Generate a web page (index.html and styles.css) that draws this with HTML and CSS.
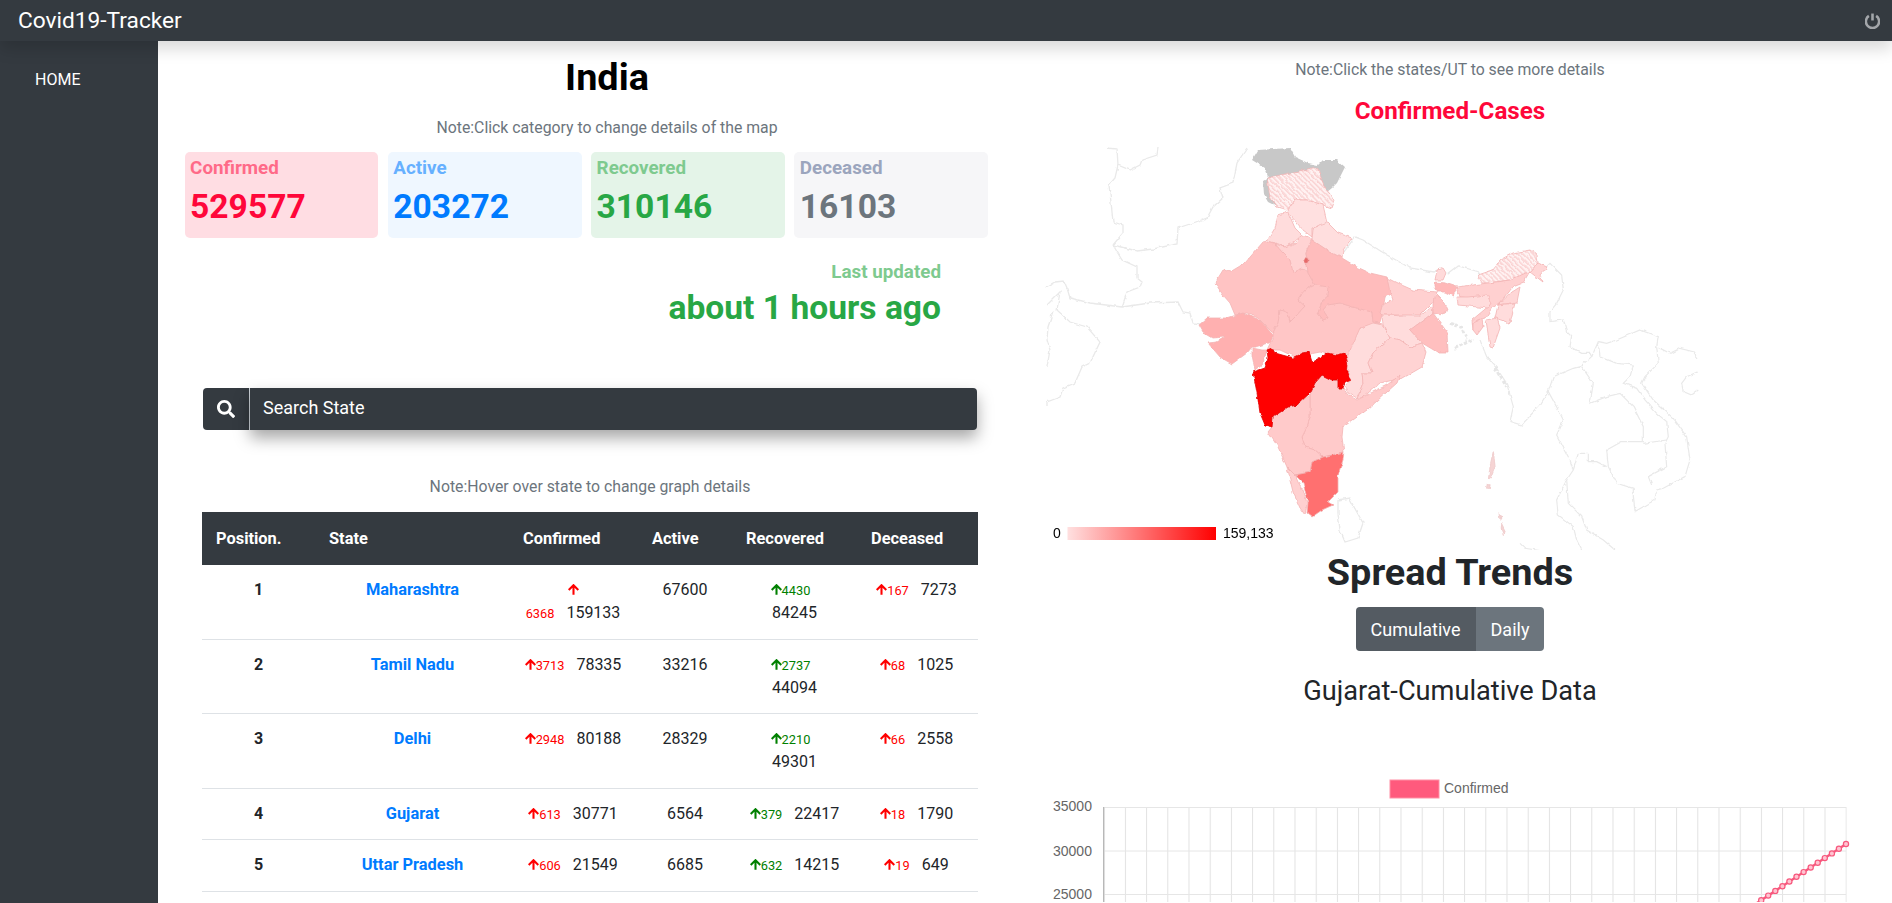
FILE: index.html
```html
<!DOCTYPE html>
<html lang="en">
<head>
  <meta charset="UTF-8">
  <title>Covid19-Tracker</title>
  <link rel="stylesheet" href="styles.css">
</head>
<body>
  <nav class="navbar">
    <span class="brand">Covid19-Tracker</span>
    <svg class="power" viewBox="1 .5 14 15"><path d="M4.6 3.2a6.2 6.2 0 1 0 6.8 0"/><path d="M8 1v6.5"/></svg>
  </nav>

  <div class="shell">
    <aside class="sidebar"><a class="side-link" href="#">HOME</a></aside>

    <main class="content">
      <section class="left">
        <h1 class="country">India</h1>
        <p class="note note-top">Note:Click category to change details of the map</p>

        <div class="cards">
          <div class="card card-red"><h5>Confirmed</h5><h2>529577</h2></div>
          <div class="card card-blue"><h5>Active</h5><h2>203272</h2></div>
          <div class="card card-green"><h5>Recovered</h5><h2>310146</h2></div>
          <div class="card card-gray"><h5>Deceased</h5><h2>16103</h2></div>
        </div>

        <div class="updated">
          <h5>Last updated</h5>
          <h2>about 1 hours ago</h2>
        </div>

        <div class="search">
          <span class="search-icon">
            <svg viewBox="0 0 512 512"><path d="M505 442.7L405.3 343c-4.5-4.5-10.6-7-17-7H372c27.6-35.3 44-79.7 44-128C416 93.1 322.9 0 208 0S0 93.1 0 208s93.1 208 208 208c48.3 0 92.7-16.4 128-44v16.3c0 6.4 2.5 12.5 7 17l99.7 99.7c9.4 9.4 24.6 9.4 33.9 0l28.3-28.3c9.4-9.4 9.4-24.6.1-34zM208 336c-70.7 0-128-57.2-128-128 0-70.7 57.2-128 128-128 70.7 0 128 57.2 128 128 0 70.7-57.2 128-128 128z"/></svg>
          </span>
          <input class="search-input" type="text" placeholder="Search State">
        </div>

        <p class="note note-table">Note:Hover over state to change graph details</p>

        <table class="states">
          <thead>
            <tr><th>Position.</th><th>State</th><th>Confirmed</th><th>Active</th><th>Recovered</th><th>Deceased</th></tr>
          </thead>
          <tbody>
            <tr>
              <td class="strong">1</td>
              <td><a class="state" href="#">Maharashtra</a></td>
              <td><span class="delta red"><svg class="arrow" viewBox="4 4 16 16"><path d="M12 19V5M5 12l7-7 7 7"/></svg><br>6368</span> 159133</td>
              <td>67600</td>
              <td><span class="delta green"><svg class="arrow" viewBox="4 4 16 16"><path d="M12 19V5M5 12l7-7 7 7"/></svg>4430</span><br>84245</td>
              <td><span class="delta red"><svg class="arrow" viewBox="4 4 16 16"><path d="M12 19V5M5 12l7-7 7 7"/></svg>167</span> 7273</td>
            </tr>
            <tr>
              <td class="strong">2</td>
              <td><a class="state" href="#">Tamil Nadu</a></td>
              <td><span class="delta red"><svg class="arrow" viewBox="4 4 16 16"><path d="M12 19V5M5 12l7-7 7 7"/></svg>3713</span> 78335</td>
              <td>33216</td>
              <td><span class="delta green"><svg class="arrow" viewBox="4 4 16 16"><path d="M12 19V5M5 12l7-7 7 7"/></svg>2737</span><br>44094</td>
              <td><span class="delta red"><svg class="arrow" viewBox="4 4 16 16"><path d="M12 19V5M5 12l7-7 7 7"/></svg>68</span> 1025</td>
            </tr>
            <tr>
              <td class="strong">3</td>
              <td><a class="state" href="#">Delhi</a></td>
              <td><span class="delta red"><svg class="arrow" viewBox="4 4 16 16"><path d="M12 19V5M5 12l7-7 7 7"/></svg>2948</span> 80188</td>
              <td>28329</td>
              <td><span class="delta green"><svg class="arrow" viewBox="4 4 16 16"><path d="M12 19V5M5 12l7-7 7 7"/></svg>2210</span><br>49301</td>
              <td><span class="delta red"><svg class="arrow" viewBox="4 4 16 16"><path d="M12 19V5M5 12l7-7 7 7"/></svg>66</span> 2558</td>
            </tr>
            <tr>
              <td class="strong">4</td>
              <td><a class="state" href="#">Gujarat</a></td>
              <td><span class="delta red"><svg class="arrow" viewBox="4 4 16 16"><path d="M12 19V5M5 12l7-7 7 7"/></svg>613</span> 30771</td>
              <td>6564</td>
              <td><span class="delta green"><svg class="arrow" viewBox="4 4 16 16"><path d="M12 19V5M5 12l7-7 7 7"/></svg>379</span> 22417</td>
              <td><span class="delta red"><svg class="arrow" viewBox="4 4 16 16"><path d="M12 19V5M5 12l7-7 7 7"/></svg>18</span> 1790</td>
            </tr>
            <tr>
              <td class="strong">5</td>
              <td><a class="state" href="#">Uttar Pradesh</a></td>
              <td><span class="delta red"><svg class="arrow" viewBox="4 4 16 16"><path d="M12 19V5M5 12l7-7 7 7"/></svg>606</span> 21549</td>
              <td>6685</td>
              <td><span class="delta green"><svg class="arrow" viewBox="4 4 16 16"><path d="M12 19V5M5 12l7-7 7 7"/></svg>632</span> 14215</td>
              <td><span class="delta red"><svg class="arrow" viewBox="4 4 16 16"><path d="M12 19V5M5 12l7-7 7 7"/></svg>19</span> 649</td>
            </tr>
          </tbody>
        </table>
      </section>

      <section class="right">
        <p class="note note-map">Note:Click the states/UT to see more details</p>
        <h4 class="map-title">Confirmed-Cases</h4>

        <!-- map coords are page pixels, so the viewBox starts at the box's corner -->
        <svg class="map" viewBox="1040 147 820 403">
          <defs>
            <pattern id="hatch" width="3.6" height="3.6" patternUnits="userSpaceOnUse" patternTransform="rotate(-45)">
              <rect width="3.6" height="3.6" fill="#fff2f2"/>
              <rect width="1.5" height="3.6" fill="#fad2d2"/>
            </pattern>
            <linearGradient id="scale">
              <stop offset="0" stop-color="#ffe0e0"/>
              <stop offset="1" stop-color="#f00"/>
            </linearGradient>
            <!-- roughens the straight polygon edges so they read like real borders -->
            <filter id="rough" x="1040" y="147" width="820" height="403" filterUnits="userSpaceOnUse" color-interpolation-filters="sRGB">
              <feTurbulence type="fractalNoise" baseFrequency="0.16" numOctaves="2" seed="4"/>
              <feDisplacementMap in="SourceGraphic" scale="3.5" xChannelSelector="R" yChannelSelector="G"/>
            </filter>
          </defs>

          <g filter="url(#rough)">
            <g class="borders">
              <polyline points="1107,148 1117,149 1118,165 1130,170 1140,165 1142,160 1157,155 1158,148"/>
              <polyline points="1118,165 1115,178 1109,185 1111,202 1113,222 1123,225 1123,233 1113,245"/>
              <polyline points="1113,245 1137,251 1153,249 1177,244 1178,228 1193,223 1207,218 1213,207 1223,198 1220,188 1233,183 1237,163 1247,148"/>
              <polyline points="1113,245 1122,260 1137,267 1137,278 1142,282 1140,287 1127,292 1122,307"/>
              <polyline points="1046,287 1055,282 1064,281 1067,288 1070,298 1090,303 1122,307 1150,303 1178,302 1183,312 1190,313 1193,323 1200,324"/>
              <polyline points="1047,305 1060,292 1057,310 1070,322 1087,327 1100,342 1090,363 1082,367 1075,383 1063,388 1060,397 1047,402 1047,407"/>
              <polyline points="1053,312 1048,327 1047,340 1050,350 1047,367"/>
              <polyline points="1343,253 1355,237 1363,240 1387,255 1410,268 1433,272 1437,270"/>
              <polyline points="1338,500 1349,498 1363,523 1358,538 1345,542 1340,530 1338,513 1338,500"/>
            </g>

            <g class="borders east" transform="translate(1400 240) scale(.3333)">
              <polyline points="140,105 175,78 235,95 240,105"/>
              <polyline points="440,80 450,70 485,105 490,150 470,190 450,215 450,245 490,240 500,275 515,290 510,320 545,340 570,340 575,350 540,380 520,385 460,410 445,455 475,510 490,540 470,585 510,660 520,690 500,720 490,740 470,780 475,825 520,860 530,900 545,930"/>
              <polyline points="240,300 260,350 290,385 320,430 340,500 330,545 365,555 420,495 445,455"/>
              <polyline points="575,350 595,305 620,310 650,300 720,270 775,290 770,320 810,340 840,325 880,335 895,355"/>
              <polyline points="595,310 600,350 650,370 700,375 690,410 670,430 710,445 735,480 770,520 800,545 805,590 795,610 800,680 745,710 755,735"/>
              <polyline points="770,320 775,370 735,410 725,430 760,480 820,535 860,590 870,660 855,710 790,745 770,750 765,780 705,815 700,770 700,745"/>
              <polyline points="895,395 860,410 845,430 850,455 875,465 895,450"/>
              <polyline points="545,380 580,430 570,490 620,470 660,460 700,500 730,560 730,605 665,605 620,630 625,680 650,730 700,745"/>
              <polyline points="730,610 800,600"/>
              <polyline points="620,680 590,665 565,665 565,640 535,640 520,690"/>
              <polyline points="500,720 505,790 545,830 560,870 610,900 645,930"/>
              <polyline points="360,910 375,925 440,935"/>
              <polyline class="bangla" points="150,250 185,262 200,300"/>
              <polyline class="bangla" points="165,325 220,298"/>
              <polyline class="bangla" points="285,385 320,440"/>
              <polygon class="andaman" points="280,635 285,680 272,715 266,710 272,670"/>
              <polygon class="andaman" points="262,733 270,735 268,745 260,744"/>
              <polygon class="andaman" points="305,855 315,875 310,882 304,868"/>
              <polygon class="andaman" points="298,822 305,830 300,838"/>
            </g>

            <g class="states-map">
              <polygon fill="#c8c8c8" stroke="none" points="1252,160 1258,150 1290,148 1295,157 1308,163 1318,165 1323,160 1337,160 1345,167 1337,183 1332,188 1327,192 1300,195 1280,208 1268,202 1264,195 1263,180 1268,177 1265,168"/>
              <polygon fill="url(#hatch)" points="1267,178 1317,167 1325,188 1335,200 1332,208 1323,205 1307,200 1295,200 1287,210 1277,207 1270,197"/>
              <polygon fill="#ffe0e0" points="1295,200 1307,200 1323,205 1327,222 1312,228 1312,237 1303,230 1290,215 1288,210"/>
              <polygon fill="#ffdcdc" points="1278,215 1288,212 1295,228 1302,235 1293,243 1285,247 1275,243 1267,241 1275,228"/>
              <polygon fill="#ffdede" points="1313,228 1328,223 1338,233 1352,238 1343,250 1342,258 1330,252 1312,240"/>
              <polygon fill="#ffc3c3" points="1267,241 1275,243 1283,253 1290,260 1293,272 1302,268 1308,273 1315,285 1305,290 1298,300 1305,306 1296,316 1290,322 1288,313 1280,310 1278,323 1273,333 1258,318 1247,313 1235,315 1230,303 1223,295 1215,283 1223,270 1230,272 1245,263 1263,242"/>
              <polygon fill="#ffd3d3" points="1275,244 1285,247 1295,243 1303,235 1312,239 1306,252 1308,272 1302,268 1293,272 1290,260 1283,253"/>
              <polygon fill="#ffc6c6" points="1305,290 1315,285 1329,287 1328,297 1322,302 1318,313 1323,320 1328,318 1323,310 1327,305 1340,303 1353,307 1372,312 1373,322 1380,323 1360,328 1365,333 1348,355 1330,355 1320,352 1305,355 1295,357 1280,350 1267,350 1273,337 1273,333 1278,323 1280,310 1288,313 1290,322 1296,316 1305,306 1298,300"/>
              <polygon fill="#ffbcbc" points="1312,240 1330,252 1342,258 1357,267 1370,273 1387,277 1390,287 1394,292 1385,297 1383,310 1380,323 1373,322 1372,312 1353,307 1340,303 1327,305 1323,310 1328,318 1323,320 1318,313 1322,302 1328,297 1329,287 1315,285 1308,273 1306,252"/>
              <polygon fill="#ffb0b0" points="1199,325 1207,318 1227,318 1243,313 1260,320 1273,335 1269,343 1255,347 1252,347 1247,353 1232,364 1220,357 1208,343 1217,342 1225,337 1213,338 1203,332"/>
              <polygon fill="#ffb8b8" points="1252,348 1262,350 1267,350 1263,363 1255,370 1252,355"/>
              <polygon fill="#ffdcdc" points="1348,355 1360,328 1373,323 1383,325 1390,338 1373,353 1368,363 1372,373 1362,373 1363,383 1357,398 1348,393 1345,387 1351,380 1347,365"/>
              <polygon fill="#ffd0d0" points="1387,278 1397,283 1413,290 1437,292 1433,302 1420,315 1407,315 1382,315 1380,313 1382,305 1393,300 1390,292"/>
              <polygon fill="#ffdcdc" points="1382,315 1407,316 1420,316 1432,307 1433,313 1410,330 1422,343 1410,347 1400,340 1390,338 1383,325"/>
              <polygon fill="#ffbfbf" points="1410,330 1433,313 1447,332 1448,352 1437,352 1422,343"/>
              <polygon fill="#ffc4c4" points="1433,302 1437,295 1445,303 1448,310 1440,315 1433,313"/>
              <polygon fill="#ffd3d3" points="1390,338 1400,340 1410,347 1422,343 1426,352 1422,367 1403,378 1380,383 1362,398 1357,398 1363,383 1362,373 1372,373 1368,363 1373,353"/>
              <polygon fill="#ffcaca" points="1310,395 1315,383 1322,375 1332,380 1338,381 1338,388 1343,388 1348,395 1357,400 1387,385 1400,375 1397,383 1367,410 1353,420 1343,427 1342,437 1344,452 1323,457 1315,450 1305,447 1302,437 1307,427 1310,417"/>
              <polygon fill="#ffcaca" points="1272,427 1273,417 1288,407 1297,405 1310,395 1310,417 1307,427 1302,437 1305,447 1315,450 1323,457 1312,462 1310,472 1295,475 1287,467 1278,447 1268,432"/>
              <polygon fill="#ffd0d0" points="1295,475 1298,482 1303,490 1307,503 1305,515 1300,508 1293,492 1287,467"/>
              <polygon fill="#ff7070" points="1344,452 1343,460 1338,475 1338,492 1328,502 1333,505 1322,510 1312,517 1307,513 1308,502 1303,483 1295,475 1310,472 1312,462 1323,457"/>
              <polygon fill="#f00" stroke="#e00000" points="1267,350 1272,348 1275,353 1293,358 1303,353 1309,352 1312,362 1328,353 1337,355 1345,353 1348,365 1347,373 1351,380 1345,383 1343,388 1338,388 1338,380 1332,380 1322,375 1315,383 1310,393 1297,405 1288,407 1273,417 1272,427 1265,425 1260,413 1257,393 1253,372 1265,368 1268,358"/>
              <circle fill="#e66a6a" cx="1306" cy="261" r="2.4"/>
              <polygon fill="#ffdada" points="1435,280 1437,270 1443,268 1446,273 1443,280"/>
              <polygon fill="#ffb8b8" points="1435,282 1445,283 1457,287 1453,296 1445,292 1438,292 1435,287"/>
              <polygon fill="url(#hatch)" points="1478,275 1493,270 1500,260 1513,253 1530,250 1537,255 1538,263 1530,272 1510,280 1488,283 1482,283"/>
              <polygon fill="#ffd6d6" points="1530,272 1538,263 1547,267 1540,275 1543,282"/>
              <polygon fill="#ffd0d0" points="1457,287 1488,283 1510,280 1530,271 1523,283 1513,287 1500,303 1492,308 1485,318 1478,320 1473,330 1472,320 1490,305 1485,300 1460,297"/>
              <polygon fill="#ffdcdc" points="1457,297 1468,297 1487,295 1491,303 1488,308 1458,305"/>
              <polygon fill="#ffd6d6" points="1500,303 1512,292 1520,287 1517,302 1498,305"/>
              <polygon fill="#ffdcdc" points="1498,305 1515,303 1510,323 1495,318"/>
              <polygon fill="#ffdcdc" points="1486,320 1497,318 1500,328 1493,348 1490,347"/>
              <polygon fill="#ffd0d0" points="1473,323 1482,319 1483,327 1477,335 1473,330"/>
            </g>
          </g>

          <text class="map-legend" x="1053" y="538">0</text>
          <rect x="1067.5" y="527" width="148.5" height="13" fill="url(#scale)"/>
          <text class="map-legend" x="1223" y="538">159,133</text>
        </svg>

        <h1 class="trends">Spread Trends</h1>
        <div class="btn-group">
          <button class="btn btn-active">Cumulative</button>
          <button class="btn">Daily</button>
        </div>
        <h3 class="chart-title">Gujarat-Cumulative Data</h3>

        <svg class="chart" viewBox="1040 770 820 133">
          <defs>
            <pattern id="vgrid" x="1103.7" y="0" width="21.2" height="200" patternUnits="userSpaceOnUse">
              <rect width="1" height="200" fill="#e2e2e2"/>
            </pattern>
          </defs>
          <rect x="1390" y="781" width="49" height="18" fill="#ff5a7d" stroke="#ff8fa6"/>
          <text class="tick" x="1444" y="794">Confirmed</text>
          <rect x="1103.7" y="808" width="743" height="95" fill="url(#vgrid)"/>
          <path class="grid" d="M1104 808.5H1846M1104 852H1846M1104 895.5H1846"/>
          <path class="axis" d="M1103.7 808V903"/>
          <text class="tick" x="1053" y="812">35000</text>
          <text class="tick" x="1053" y="857">30000</text>
          <text class="tick" x="1053" y="900">25000</text>
          <polyline class="trend" points="1846,845 1754,906"/>
          <g class="pts">
            <circle cx="1846" cy="845" r="2.6"/><circle cx="1838.9" cy="849.7" r="2.6"/><circle cx="1831.9" cy="854.4" r="2.6"/>
            <circle cx="1824.8" cy="859.1" r="2.6"/><circle cx="1817.7" cy="863.8" r="2.6"/><circle cx="1810.7" cy="868.5" r="2.6"/>
            <circle cx="1803.6" cy="873.1" r="2.6"/><circle cx="1796.5" cy="877.8" r="2.6"/><circle cx="1789.4" cy="882.5" r="2.6"/>
            <circle cx="1782.4" cy="887.2" r="2.6"/><circle cx="1775.3" cy="891.9" r="2.6"/><circle cx="1768.2" cy="896.6" r="2.6"/>
            <circle cx="1761.2" cy="901.3" r="2.6"/>
          </g>
        </svg>
      </section>
    </main>
  </div>
</body>
</html>
```
FILE: styles.css
```css
* {
  box-sizing: border-box;
}

html, body {
  height: 100%;
}

body {
  margin: 0;
  font-family: Roboto, "Liberation Sans", sans-serif;
  font-size: 16px;
  color: #212529;
  background: #fff;
  overflow: hidden;
}

.navbar {
  position: relative;
  z-index: 2;
  height: 41px;
  padding: 0 12px 0 18px;
  display: flex;
  align-items: center;
  justify-content: space-between;
  background: #343a40;
  box-shadow: 0 8px 16px rgba(0,0,0,0.15);
}

.brand {
  color: #fff;
  font-size: 22.7px;
}

.power {
  width: 15px;
  height: 16px;
  fill: none;
  stroke: #a3a6aa;
  stroke-width: 2.4;
}

.shell {
  display: flex;
  height: calc(100% - 41px);
}

.sidebar {
  width: 158px;
  flex: none;
  background: #343a40;
  padding-top: 27px;
  padding-left: 35px;
}

.side-link {
  color: #fff;
  text-decoration: none;
  line-height: 24px;
}

.content {
  flex: 1;
  display: flex;
  overflow: hidden;
}

.left {
  width: 867px;
  flex: none;
}

.right {
  width: 820px;
  flex: none;
  margin-left: 15px;
  text-align: center;
}

.note {
  margin: 0;
  color: #6c757d;
  font-size: 15.8px;
  line-height: 24px;
}

.country {
  margin: 14px 0 0;
  padding-left: 31px;
  text-align: center;
  font-size: 37.8px;
  line-height: 44px;
  color: #000;
}

.note-top {
  margin-top: 17px;
  padding-left: 31px;
  text-align: center;
}

.cards {
  display: flex;
  gap: 9.6px;
  margin: 12px 37px 0 26.6px;
}

.card {
  flex: 1;
  height: 86px;
  padding: 4px 5.5px;
  border-radius: 5px;
}

.card h5, .updated h5 {
  margin: 0;
  font-size: 18.8px;
  line-height: 24px;
  font-weight: 700;
}

.card h2 {
  margin: 7px 0 0;
  font-size: 33.6px;
  line-height: 40px;
  font-weight: 700;
}

.card-red { background: #ffdde3; color: #ff073a; }
.card-blue { background: #eff7ff; color: #007bff; }
.card-green { background: #e4f4e8; color: #28a745; }
.card-gray { background: #f6f6f8; color: #6c757d; }

.card-red h5 { color: #ff6a88; }
.card-blue h5 { color: #66b0ff; }
.card-green h5 { color: #7eca8f; }
.card-gray h5 { color: #9ba5bd; }

.updated {
  margin-top: 22px;
  padding-right: 84px;
  text-align: right;
}

.updated h5 {
  color: #7eca8f;
}

.updated h2 {
  margin: 4px 0 0;
  font-size: 33.6px;
  line-height: 40px;
  color: #28a745;
}

.search {
  display: flex;
  height: 42px;
  margin: 60px 48px 0 45px;
}

.search-icon {
  width: 47px;
  flex: none;
  display: flex;
  align-items: center;
  justify-content: center;
  background: #343a40;
  border-right: 1px solid #ced4da;
  border-radius: 4px 0 0 4px;
}

.search-icon svg {
  width: 18px;
  height: 18px;
  fill: #fff;
}

.search-input {
  flex: 1;
  border: 0;
  padding: 0 13px 3px;
  font: inherit;
  font-size: 18px;
  color: #fff;
  background: #343a40;
  border-radius: 0 4px 4px 0;
  box-shadow: 0 8px 16px rgba(0,0,0,0.35);
}

.search-input::placeholder {
  color: #fff;
  opacity: 1;
}

.note-table {
  margin-top: 45px;
  margin-right: 47px;
  margin-left: 44px;
  text-align: center;
}

.states {
  width: 776px;
  margin: 13px 0 0 44px;
  table-layout: fixed;
  border-collapse: collapse;
}

.states th {
  padding: 14.5px 0 14.5px 14px;
  background: #343a40;
  color: #fff;
  font-size: 16.4px;
  line-height: 24px;
  text-align: left;
  font-weight: 700;
}

.states th:nth-child(1) { width: 113px; }
.states th:nth-child(2) { width: 195px; }
.states th:nth-child(3) { width: 126px; padding-left: 13px; }
.states th:nth-child(4) { width: 98px; padding-left: 16px; }
.states th:nth-child(5) { width: 121px; padding-left: 12px; }
.states th:nth-child(6) { width: 123px; padding-left: 16px; }

.states td {
  padding: 13.25px 0 14.25px;
  border-bottom: 1px solid #dee2e6;
  line-height: 23px;
  text-align: center;
  vertical-align: top;
}

.strong {
  font-weight: 700;
}

.state {
  color: #007bff;
  font-size: 16.4px;
  font-weight: 700;
  text-decoration: none;
}

.delta {
  margin-right: 8px;
  font-size: 12.8px;
  line-height: 1;
}

.red { color: #f00; }
.green { color: #008000; }

.arrow {
  width: 11px;
  height: 12px;
  vertical-align: -1px;
  fill: none;
  stroke: currentColor;
  stroke-width: 3;
}

.note-map {
  margin-top: 17px;
}

.map-title {
  margin: 13px 0 0;
  font-size: 24.2px;
  line-height: 32px;
  font-weight: 700;
  color: #ff073a;
}

.map {
  display: block;
  width: 820px;
  height: 403px;
  margin-top: 20px;
}

.borders {
  fill: #fff;
  stroke: #e9e9e9;
  stroke-width: 1.3;
}

.borders polyline {
  fill: none;
}

.east {
  stroke-width: 3.6;
}

.borders polyline.bangla {
  stroke: #e6e6e6;
  stroke-width: 9;
  stroke-dasharray: 10 5;
}

.andaman {
  fill: #f6d4d4;
  stroke: #f1d0d0;
}

.states-map {
  stroke: #f2b4b4;
  stroke-width: 0.8;
  stroke-linejoin: round;
}

.map-legend {
  font-family: "Liberation Sans", Arial, sans-serif;
  font-size: 14px;
  fill: #000;
}

.trends {
  margin: 0;
  font-size: 37.8px;
  line-height: 44px;
}

.btn-group {
  display: inline-flex;
  margin-top: 13px;
  vertical-align: top;
}

.btn {
  height: 44px;
  padding: 0 15px;
  border: 0;
  background: #6c757d;
  color: #fff;
  font: inherit;
  font-size: 18px;
  border-radius: 0 4px 4px 0;
}

.btn-active {
  background: #545b62;
  border-radius: 4px 0 0 4px;
}

.chart-title {
  margin: 22px 0 0;
  font-size: 27.2px;
  line-height: 36px;
  font-weight: 400;
}

.chart {
  display: block;
  width: 820px;
  height: 133px;
  margin-top: 60px;
}

.tick {
  font-family: "Liberation Sans", Arial, sans-serif;
  font-size: 14px;
  fill: #666;
}

.grid {
  fill: none;
  stroke: #e6e6e6;
}

.axis {
  fill: none;
  stroke: #a8a8a8;
}

.trend {
  fill: none;
  stroke: #f7587d;
  stroke-width: 2.4;
}

.pts circle {
  fill: #ffc4d1;
  stroke: #f7587d;
  stroke-width: 1.2;
}
```
